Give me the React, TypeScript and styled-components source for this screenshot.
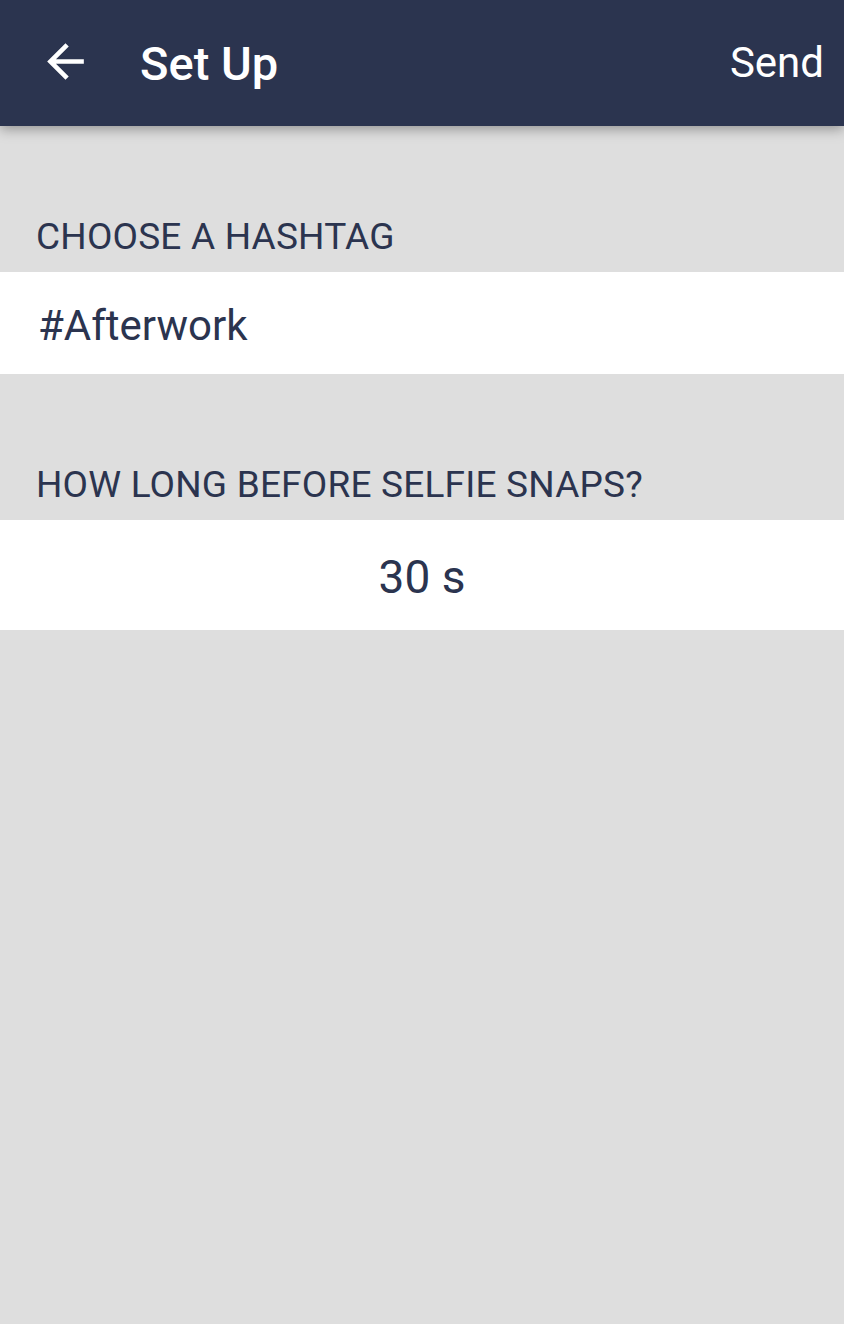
import React from "react";
import styled, { createGlobalStyle } from "styled-components";

const Global = createGlobalStyle`
  html, body { margin: 0; padding: 0; background: #dedede; }
  body { font-family: Roboto, "Noto Sans", sans-serif; }
  * { box-sizing: border-box; }
`;

const Page = styled.div`
  width: 844px;
  min-height: 1324px;
  background: #dedede;
  display: flex;
  flex-direction: column;
`;

const TopBar = styled.header`
  height: 126px;
  background: #2b344f;
  display: flex;
  align-items: center;
  padding: 0 20px 0 38px;
  box-shadow: 0 3px 12px rgba(0, 0, 0, 0.35);
  position: relative;
  z-index: 1;
`;

const BackButton = styled.button`
  width: 55px;
  height: 55px;
  padding: 0;
  border: none;
  background: none;
  display: flex;
  color: #ffffff;
  margin-top: -4px;
`;

const Title = styled.h1`
  margin: 0 0 0 47px;
  font-size: 47px;
  font-weight: 500;
  color: #ffffff;
  flex: 1;
  line-height: 1;
`;

const Action = styled.button`
  border: none;
  background: none;
  padding: 0;
  font-family: Roboto, sans-serif;
  font-size: 42px;
  color: #ffffff;
  line-height: 1;
`;

const Section = styled.section<{ $top: number }>`
  display: flex;
  flex-direction: column;
  margin-top: ${(p) => p.$top}px;
`;

const Label = styled.div`
  font-size: 37px;
  letter-spacing: 0.2px;
  color: #2b344f;
  padding: 0 36px;
  line-height: 1;
  height: 54px;
`;

const Field = styled.div<{ $height: number; $shift: number; $center?: boolean }>`
  background: #ffffff;
  height: ${(p) => p.$height}px;
  display: flex;
  align-items: center;
  justify-content: ${(p) => (p.$center ? "center" : "flex-start")};
  padding: ${(p) => p.$shift}px 38px 0;
  color: #2b344f;
`;

const FieldText = styled.span<{ $size: number }>`
  font-size: ${(p) => p.$size}px;
  line-height: 1;
`;

export default function App() {
  return (
    <Page>
      <Global />
      <TopBar>
        <BackButton aria-label="Back">
          <svg width="55" height="55" viewBox="0 0 24 24" fill="currentColor">
            <path d="M20 11H7.83l5.59-5.59L12 4l-8 8 8 8 1.41-1.41L7.83 13H20v-2z" />
          </svg>
        </BackButton>
        <Title>Set Up</Title>
        <Action>Send</Action>
      </TopBar>
      <Section $top={92}>
        <Label>CHOOSE A HASHTAG</Label>
        <Field $height={102} $shift={6}>
          <FieldText $size={42}>#Afterwork</FieldText>
        </Field>
      </Section>
      <Section $top={92}>
        <Label>HOW LONG BEFORE SELFIE SNAPS?</Label>
        <Field $height={110} $shift={3} $center>
          <FieldText $size={46}>30 s</FieldText>
        </Field>
      </Section>
    </Page>
  );
}
